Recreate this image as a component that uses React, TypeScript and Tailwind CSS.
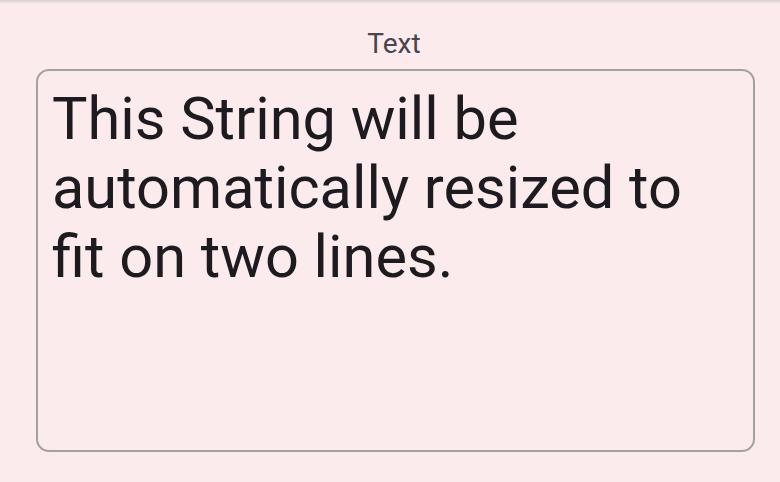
export default function App() {
  return (
    <div
      className="relative flex h-[482px] w-[780px] flex-col bg-[#fbebec]"
      style={{ fontFamily: 'Roboto, "Noto Sans", sans-serif' }}
    >
      {/* top edge shadow */}
      <div className="absolute inset-x-0 top-0 h-[4px] bg-gradient-to-b from-[#d9cfd0] to-transparent" />

      <div className="mt-[27px] self-center pl-[8px] text-[28px] leading-[34px] text-[#49454f]">Text</div>

      <div className="ml-[36px] mt-[8px] h-[383px] w-[719px] rounded-[13px] border-2 border-[#a3a1a2] px-[14px] pt-[14px]">
        <p className="text-[59.5px] leading-[69px] text-[#1d1b20]">
          This String will be automatically resized to fit on two lines.
        </p>
      </div>
    </div>
  );
}
